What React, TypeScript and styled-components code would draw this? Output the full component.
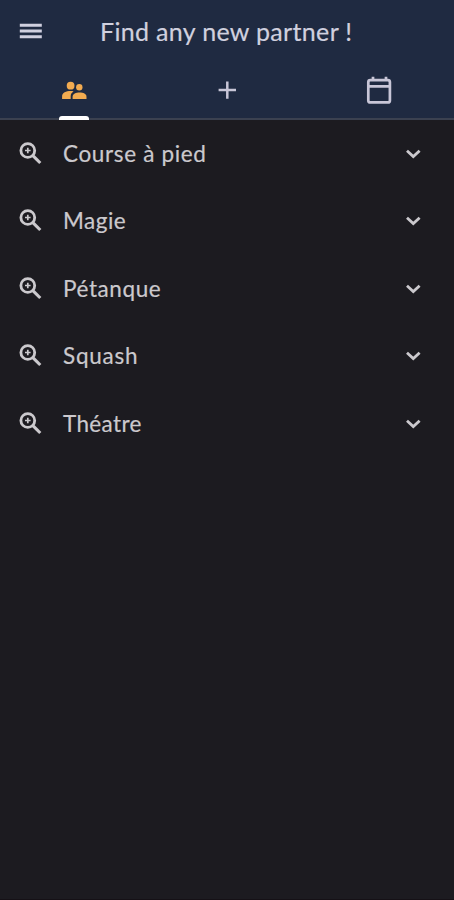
import React from 'react';
import styled, { createGlobalStyle } from 'styled-components';

const GlobalStyle = createGlobalStyle`
  * { box-sizing: border-box; }
  body { margin: 0; background: #1c1b20; font-family: Lato, "Open Sans", sans-serif; }
`;

const Screen = styled.main`
  display: flex;
  flex-direction: column;
  width: 454px;
  height: 900px;
  overflow: hidden;
  background: #1c1b20;
  border-bottom: 1px solid #151116;
`;

const Header = styled.header`
  height: 120px;
  background: #1f2a41;
  border-bottom: 2px solid #3b4150;
`;

const TitleBar = styled.div`
  display: flex;
  align-items: center;
  height: 62px;
  padding-left: 15px;
  color: #d0d0df;
`;

const Title = styled.h1`
  margin: 0 0 1px 55px;
  font-size: 25px;
  line-height: 30px;
  font-weight: 400;
  letter-spacing: 0.33px;
  white-space: nowrap;
  -webkit-text-stroke: 0.2px currentColor;
`;

const Tabs = styled.nav`
  display: flex;
  justify-content: space-between;
  height: 58px;
  padding: 0 60px 0 59px;
`;

const Tab = styled.button<{ $active?: boolean }>`
  display: flex;
  flex-direction: column;
  align-items: center;
  justify-content: space-between;
  width: 30px;
  height: 58px;
  padding: 13px 0 0;
  border: 0;
  background: none;
  color: ${({ $active }) => ($active ? '#f2ab50' : '#c8c6d7')};
`;

const Indicator = styled.span`
  width: 30px;
  height: 4px;
  flex: none;
  border-radius: 3px 3px 0 0;
  background: #fff;
`;

const List = styled.ul`
  margin: 0;
  padding: 0;
  list-style: none;
`;

const Row = styled.li`
  display: flex;
  align-items: center;
  height: 67.5px;
  padding: 0 26px 0 15px;
  color: #cbc9cd;
`;

const Label = styled.span<{ $spacing: number }>`
  flex: 1;
  margin-left: 18px;
  font-size: 22.5px;
  line-height: 28px;
  letter-spacing: ${({ $spacing }) => $spacing}px;
  -webkit-text-stroke: 0.2px currentColor;
`;

const Icon = styled.svg`
  display: block;
  flex: none;
  width: 30px;
  height: 30px;
`;

const activities = [
  { name: 'Course à pied', spacing: 0.65 },
  { name: 'Magie', spacing: 0.5 },
  { name: 'Pétanque', spacing: 0.6 },
  { name: 'Squash', spacing: 0.75 },
  { name: 'Théatre', spacing: 0.35 },
];

const MenuIcon = () => (
  <Icon viewBox="0 0 30 30" fill="none" stroke="currentColor" strokeWidth="3.1">
    <path d="M4.8 9.2h22M4.8 15h22M4.8 20.7h22" />
  </Icon>
);

const PeopleIcon = () => (
  <Icon viewBox="0 0 30 30" fill="currentColor">
    <circle cx="11.6" cy="10.7" r="3.9" />
    <circle cx="20.3" cy="12.2" r="3.2" />
    <path d="M3.1 24v-2.6c0-3.7 4-5.4 8.6-5.4 1.1 0 2 .1 2.9.4-2.1 1.2-2.9 2.6-2.9 4.8V24z" />
    <path d="M13.6 24v-2.3c0-2.8 3.3-4.2 7-4.2s6.9 1.4 6.9 4.2V24z" />
  </Icon>
);

const PlusIcon = () => (
  <Icon viewBox="0 0 30 30" fill="none" stroke="currentColor" strokeWidth="2.5">
    <path d="M15.3 6.4v17.4M6.6 15.1H24" />
  </Icon>
);

const CalendarIcon = () => (
  <Icon viewBox="0 0 30 30" fill="none" stroke="currentColor" strokeWidth="2.7">
    <rect x="4.3" y="5.1" width="21.6" height="22.3" rx="2" />
    <path d="M4.3 11.4h21.6M9 1.8v4M22 1.8v4" />
  </Icon>
);

const SearchIcon = () => (
  <Icon viewBox="0 0 30 30" fill="none" stroke="currentColor" strokeWidth="2.8">
    <circle cx="12.8" cy="11.5" r="6.9" />
    <path d="M17.6 16.3l7.7 7.7" strokeWidth="3.1" />
    <path d="M12.8 8.7v5.6M10 11.5h5.6" strokeWidth="1.7" />
  </Icon>
);

const ChevronIcon = () => (
  <Icon viewBox="0 0 30 30" fill="none" stroke="currentColor" strokeWidth="2.8">
    <path d="M9 11.7l6.3 5.8 6.3-5.8" />
  </Icon>
);

export default function App() {
  return (
    <>
      <GlobalStyle />
      <Screen>
        <Header>
          <TitleBar>
            <MenuIcon />
            <Title>Find any new partner !</Title>
          </TitleBar>
          <Tabs>
            <Tab $active aria-label="Partners">
              <PeopleIcon />
              <Indicator />
            </Tab>
            <Tab aria-label="Add"><PlusIcon /></Tab>
            <Tab aria-label="Calendar"><CalendarIcon /></Tab>
          </Tabs>
        </Header>
        <List>
          {activities.map(({ name, spacing }) => (
            <Row key={name}>
              <SearchIcon />
              <Label $spacing={spacing}>{name}</Label>
              <ChevronIcon />
            </Row>
          ))}
        </List>
      </Screen>
    </>
  );
}
